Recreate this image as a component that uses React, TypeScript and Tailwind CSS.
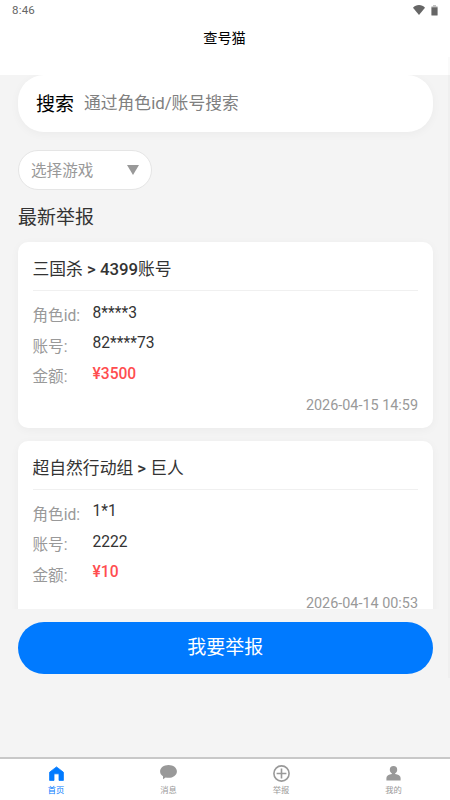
import React from 'react';

interface Report {
  game: string;
  server: string;
  roleId: string;
  account: string;
  amount: string;
  time: string;
}

const reports: Report[] = [
  { game: '三国杀', server: '4399账号', roleId: '8****3', account: '82****73', amount: '¥3500', time: '2026-04-15 14:59' },
  { game: '超自然行动组', server: '巨人', roleId: '1*1', account: '2222', amount: '¥10', time: '2026-04-14 00:53' },
];

// Only the latin part of a title is set in medium weight
const MixedTitle = ({ text }: { text: string }) => (
  <>
    {text.split(/([\x20-\x7e]+)/).map((part, i) => (
      <span key={i} className={i % 2 ? 'font-medium' : 'font-normal'}>{part}</span>
    ))}
  </>
);

const StatusBar = () => (
  <div className="flex h-5 items-center justify-between pl-3 pr-3 text-[#666]">
    <span className="text-[11.5px] leading-5 tracking-[0.2px]">8:46</span>
    <div className="flex items-center gap-[6px]">
      <svg className="h-[10px] w-[12px]" viewBox="0 0 12 10" fill="currentColor">
        <path d="M6 10 0 2.700C1.600 1 3.600 0 6 0s4.400 1 6 2.700z" />
      </svg>
      <svg className="h-[11px] w-[7px]" viewBox="0 0 7 11" fill="currentColor">
        <path d="M2 0h3v1.2H2zM.4 1.200h6.200v1H.4z" opacity="0.4" />
        <path d="M.4 2.200h6.200v7.800q0 .6-.6.6H1q-.6 0-.6-.6z" />
      </svg>
    </div>
  </div>
);

const Row = ({ label, value, highlight }: { label: string; value: string; highlight?: boolean }) => (
  <div className="flex h-[30.5px] items-start text-[15.6px]">
    <span className="w-[60px] pt-[3.5px] leading-[23px] text-[#999]">{label}</span>
    <span className={highlight ? 'font-medium leading-[23px] text-[#ff4d4f]' : 'leading-[23px] text-[#333]'}>{value}</span>
  </div>
);

const ReportCard = ({ report }: { report: Report }) => (
  <div className="h-[186px] shrink-0 rounded-[10px] bg-white px-[14.5px] shadow-[0_2px_10px_rgba(0,0,0,0.04)]">
    <div className="h-[49px] border-b border-[#f0f0f0] pt-[14px] text-[16.8px] leading-[26px] text-[#333]">
      <MixedTitle text={`${report.game} > ${report.server}`} />
    </div>
    <div className="pt-[10.7px]">
      <Row label="角色id:" value={report.roleId} />
      <Row label="账号:" value={report.account} />
      <Row label="金额:" value={report.amount} highlight />
    </div>
    <div className="pt-[1.3px] text-right text-[14.4px] leading-[22px] text-[#999]">{report.time}</div>
  </div>
);

const tabs = [
  {
    label: '首页',
    icon: <path d="M8.5 1.900 15.400 7.200V15.400H11V8.800H6V15.400H1.600V7.200z" stroke="currentColor" strokeWidth="0.8" strokeLinejoin="round" />,
  },
  {
    label: '消息',
    icon: <path d="M8.5 0C13.2 0 16.9 2.8 16.9 6.4s-3.7 6.4-8.4 6.4c-1 0-2-.1-2.9-.4L3 14.2v-3C1.2 10 .1 8.3.1 6.4.1 2.8 3.8 0 8.5 0z" />,
  },
  {
    label: '举报',
    icon: (
      <g fill="none" stroke="currentColor" strokeWidth="1.6">
        <circle cx="8.5" cy="8.5" r="7.6" />
        <path d="M8.5 3.6v9.8M3.6 8.5h9.8" />
      </g>
    ),
  },
  {
    label: '我的',
    icon: (
      <>
        <path d="M8.5 1a3.7 3.7 0 0 1 3.7 3.7c0 1.6-.9 3-2.100 3.700V9.500H6.900V8.400C5.700 7.700 4.800 6.300 4.800 4.700A3.700 3.700 0 0 1 8.500 1z" />
        <path d="M1.400 15.400V13c0-2.300 2.400-3.700 5.500-4.100h3.200c3.100.4 5.500 1.800 5.500 4.100v2.400z" />
      </>
    ),
  },
];

const TabBar = () => (
  <nav className="flex h-[43px] border-t-2 border-[#c8c8c8] bg-white">
    {tabs.map((tab, i) => (
      <div key={tab.label} className={`flex flex-1 flex-col items-center pr-[0.4px] pt-[6px] ${i === 0 ? 'text-[#007aff]' : 'text-[#999]'}`}>
        <svg className="h-[17px] w-[17px]" viewBox="0 0 17 17" fill="currentColor">{tab.icon}</svg>
        <span className="mt-[2px] text-[8.3px] leading-3">{tab.label}</span>
      </div>
    ))}
  </nav>
);

const App = () => {
  return (
    <div className="relative flex h-[800px] w-[450px] flex-col overflow-hidden bg-[#f4f4f4] font-[Roboto,'Noto_Sans_CJK_SC',sans-serif]">
      <header className="h-[75px] shrink-0 bg-white">
        <StatusBar />
        <h1 className="pr-px pt-[6px] text-center text-[14.2px] leading-6 text-black">查号猫</h1>
      </header>

      <main className="flex min-h-0 flex-1 flex-col">
        <div className="flex h-[534px] shrink-0 flex-col overflow-hidden px-[18px] pr-[17.5px]">
          <div className="flex h-[57px] shrink-0 items-center rounded-[26px] bg-white pl-[18px] pt-px shadow-[0_2px_10px_rgba(0,0,0,0.04)]">
            <span className="pt-[2px] text-[19px] text-black">搜索</span>
            <span className="ml-[10px] text-[16.8px] text-[#808080]">通过角色id/账号搜索</span>
          </div>

          <div className="mt-[18px] flex h-10 w-[134px] shrink-0 items-center justify-between rounded-full border border-[#e5e5e5] bg-white pl-3 pr-3 text-[15.6px] text-[#999]">
            <span className="pt-[3px]">选择游戏</span>
            <svg className="h-[10px] w-[12px]" viewBox="0 0 12 10" fill="currentColor">
              <path d="M0 0h12L6 10z" />
            </svg>
          </div>

          <h2 className="mt-[13px] h-[39.3px] shrink-0 text-[19px] leading-[29px] text-[#333]">最新举报</h2>

          <div className="flex flex-col gap-[12.5px]">
            {reports.map((report) => (
              <ReportCard key={report.time} report={report} />
            ))}
          </div>
        </div>

        <button className="ml-[18px] mr-[17.5px] mt-[12.5px] h-[52.5px] shrink-0 rounded-full bg-[#007aff] pt-px text-[19px] text-white">
          我要举报
        </button>
      </main>

      <TabBar />

      {/* scroll thumb */}
      <div className="absolute right-0 top-[57px] h-[621px] w-[2px] bg-black/[0.02]" />
    </div>
  );
};

export default App;
